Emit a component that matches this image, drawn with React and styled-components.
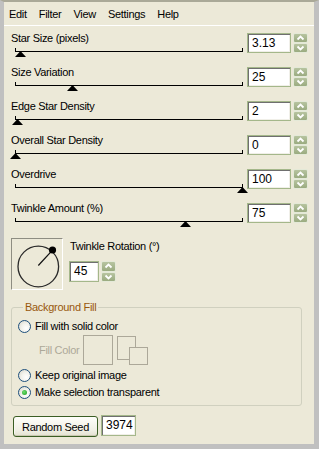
import React from "react";
import styled, { createGlobalStyle } from "styled-components";

const Global = createGlobalStyle`
  * { box-sizing: border-box; }
  html, body { margin: 0; padding: 0; background: #c0c0c0; }
  body { font-family: "Liberation Sans", Arial, sans-serif; font-size: 11px; color: #000; }
`;

const Window = styled.div`
  width: 319px;
  height: 449px;
  background: #ece9d8;
  border-top: 2px solid #aaa998;
  border-left: 4px solid #c0c0c0;
  border-right: 5px solid #c0c0c0;
  border-bottom: 5px solid #c0c0c0;
  display: flex;
  flex-direction: column;
  overflow: hidden;
`;

const MenuBar = styled.div`
  height: 24px;
  display: flex;
  align-items: center;
  padding-left: 5px;
  gap: 12px;
  border-bottom: 1px solid #ffffff;
  flex-shrink: 0;
`;

const MenuItem = styled.span`
  letter-spacing: -0.3px;
  line-height: 13px;
  margin-top: 2px;
`;

const Content = styled.div`
  padding: 5px 6px 0 7px;
  display: flex;
  flex-direction: column;
`;

const SliderRow = styled.div`
  height: 34px;
  display: grid;
  grid-template-columns: 236px auto;
  align-items: start;
`;

const LeftCol = styled.div`
  display: flex;
  flex-direction: column;
`;

const Label = styled.div`
  line-height: 13px;
  margin-top: 1px;
  letter-spacing: -0.3px;
  white-space: nowrap;
`;

const Track = styled.div`
  position: relative;
  margin: 3px 0 0 4px;
  width: 228px;
  height: 4px;
  border: 1px solid #000;
  border-top: none;
`;

const Thumb = styled.svg`
  position: absolute;
  top: 3px;
  width: 11px;
  height: 6px;
  display: block;
`;

const SpinGroup = styled.div`
  display: flex;
  gap: 2px;
  margin-top: ${(p) => p.$mt ?? 2}px;
`;

const NumBox = styled.div`
  width: ${(p) => p.$w}px;
  height: ${(p) => p.$h || 20}px;
  border: 1px solid #a4b78a;
  background: #fff;
  box-shadow: inset 1px 1px 0 #6f6f6f, inset -1px -1px 0 #f0efe8;
  font-size: 12px;
  line-height: ${(p) => (p.$h || 20) - 2}px;
  padding-left: 4px;
  font-family: "Liberation Sans", Arial, sans-serif;
`;

const Spinner = styled.div`
  width: 15px;
  display: flex;
  flex-direction: column;
`;

const SpinBtn = styled.div`
  flex: 1;
  border: 1px solid #e4e9d8;
  border-radius: 2px;
  background: linear-gradient(#b7c4a0, #9aab80);
  display: flex;
  align-items: center;
  justify-content: center;
`;

const DialRow = styled.div`
  display: flex;
  gap: 6px;
  margin-top: 3px;
`;

const DialBox = styled.div`
  width: 52px;
  height: 52px;
  border-top: 1px solid #8e8d82;
  border-left: 1px solid #8e8d82;
  border-bottom: 1px solid #ffffff;
  border-right: 1px solid #ffffff;
`;

const DialSide = styled.div`
  display: flex;
  flex-direction: column;
`;

const DialLabel = styled.div`
  line-height: 13px;
  margin-top: 2px;
  padding-left: 1px;
  letter-spacing: -0.3px;
`;

const Group = styled.fieldset`
  margin: 11px 6px 0 0;
  padding: 4px 6px 5px 6px;
  border: 1px solid #d0d0bf;
  border-radius: 3px;
  display: flex;
  flex-direction: column;
  min-width: 0;
`;

const Legend = styled.legend`
  margin-left: 5px;
  padding: 0 2px;
  line-height: 13px;
  color: #98580c;
  letter-spacing: -0.3px;
`;

const RadioRow = styled.label`
  display: flex;
  align-items: center;
  gap: 4px;
  height: 16px;
  margin-top: ${(p) => p.$mt || 0}px;
  letter-spacing: -0.3px;
  white-space: nowrap;
`;

const RadioDot = styled.span`
  width: 13px;
  height: 13px;
  border-radius: 50%;
  border: 1px solid #1d4f7c;
  background: radial-gradient(circle at 65% 65%, #ffffff 0%, #f2f2ec 45%, #d6d4c8 100%);
  display: flex;
  align-items: center;
  justify-content: center;
  flex-shrink: 0;
  &::after {
    content: "";
    width: 5px;
    height: 5px;
    border-radius: 50%;
    background: ${(p) => (p.$on ? "radial-gradient(circle at 40% 40%, #6fe06f, #1a9a1a)" : "transparent")};
  }
`;

const FillRow = styled.div`
  display: flex;
  align-items: center;
  height: 30px;
  margin-top: 1px;
`;

const FillLabel = styled.span`
  color: #aca899;
  margin-left: 21px;
  width: 44px;
  letter-spacing: -0.3px;
  white-space: nowrap;
`;

const Swatch = styled.div`
  width: 30px;
  height: 30px;
  border: 1px solid #aca899;
`;

const Pair = styled.div`
  position: relative;
  width: 31px;
  height: 30px;
  margin-left: 4px;
`;

const PairBack = styled.div`
  width: 19px;
  height: 24px;
  border: 1px solid #aca899;
  margin-top: 1px;
`;

const PairFront = styled.div`
  position: absolute;
  left: 12px;
  top: 12px;
  width: 19px;
  height: 18px;
  border: 1px solid #aca899;
  background: #ece9d8;
`;

const Footer = styled.div`
  display: flex;
  align-items: flex-start;
  gap: 3px;
  margin-top: 9px;
  padding-left: 2px;
`;

const Button = styled.button`
  width: 85px;
  height: 21px;
  margin-top: 1px;
  border: 1px solid #3b5e24;
  border-radius: 3px;
  background: linear-gradient(#fefefa, #f0efe4 70%, #e3e1d0);
  box-shadow: inset 0 -1px 0 #c9c7b0, inset 1px 0 0 #f8f8f2;
  font-family: "Liberation Sans", Arial, sans-serif;
  font-size: 11px;
  color: #000;
  padding: 0;
  letter-spacing: -0.3px;
`;

const Up = () => (
  <svg width="9" height="6" viewBox="0 0 9 6">
    <polyline points="1.5,4.5 4.5,1.5 7.5,4.5" fill="none" stroke="#fff" strokeWidth="1.8" />
  </svg>
);
const Down = () => (
  <svg width="9" height="6" viewBox="0 0 9 6">
    <polyline points="1.5,1.5 4.5,4.5 7.5,1.5" fill="none" stroke="#fff" strokeWidth="1.8" />
  </svg>
);

const Spin = ({ value, w, h, mt }) => (
  <SpinGroup $mt={mt}>
    <NumBox $w={w} $h={h}>{value}</NumBox>
    <Spinner>
      <SpinBtn><Up /></SpinBtn>
      <SpinBtn><Down /></SpinBtn>
    </Spinner>
  </SpinGroup>
);

const TRACK = 227;

const sliders = [
  { label: "Star Size (pixels)", value: "3.13", frac: 0.022 },
  { label: "Size Variation", value: "25", frac: 0.25 },
  { label: "Edge Star Density", value: "2", frac: 0.01 },
  { label: "Overall Star Density", value: "0", frac: 0 },
  { label: "Overdrive", value: "100", frac: 1 },
  { label: "Twinkle Amount (%)", value: "75", frac: 0.75 },
];

const Slider = ({ label, value, frac }) => (
  <SliderRow>
    <LeftCol>
      <Label>{label}</Label>
      <Track>
        <Thumb viewBox="0 0 11 6" style={{ left: Math.round(frac * TRACK) - 6 }}>
          <polygon points="5.5,0 11,6 0,6" fill="#000" />
        </Thumb>
      </Track>
    </LeftCol>
    <Spin value={value} w={44} />
  </SliderRow>
);

export default function App() {
  return (
    <>
      <Global />
      <Window>
        <MenuBar>
          <MenuItem>Edit</MenuItem>
          <MenuItem>Filter</MenuItem>
          <MenuItem>View</MenuItem>
          <MenuItem>Settings</MenuItem>
          <MenuItem>Help</MenuItem>
        </MenuBar>
        <Content>
          {sliders.map((s) => (
            <Slider key={s.label} {...s} />
          ))}
          <DialRow>
            <DialBox>
              <svg width="50" height="50" viewBox="0 0 50 50">
                <circle cx="26.3" cy="27.5" r="20.3" fill="none" stroke="#2a2a2a" strokeWidth="1.3" />
                <line x1="26.3" y1="26.5" x2="40.3" y2="11.3" stroke="#111" strokeWidth="1.2" />
                <circle cx="40.5" cy="11" r="3.6" fill="#000" />
              </svg>
            </DialBox>
            <DialSide>
              <DialLabel>Twinkle Rotation (°)</DialLabel>
              <Spin value="45" w={30} h={21} mt={8} />
            </DialSide>
          </DialRow>
          <Group>
            <Legend>Background Fill</Legend>
            <RadioRow>
              <RadioDot />
              Fill with solid color
            </RadioRow>
            <FillRow>
              <FillLabel>Fill Color</FillLabel>
              <Swatch />
              <Pair>
                <PairBack />
                <PairFront />
              </Pair>
            </FillRow>
            <RadioRow $mt={2}>
              <RadioDot />
              Keep original image
            </RadioRow>
            <RadioRow $mt={1}>
              <RadioDot $on />
              Make selection transparent
            </RadioRow>
          </Group>
          <Footer>
            <Button>Random Seed</Button>
            <NumBox $w={35} $h={21}>3974</NumBox>
          </Footer>
        </Content>
      </Window>
    </>
  );
}
